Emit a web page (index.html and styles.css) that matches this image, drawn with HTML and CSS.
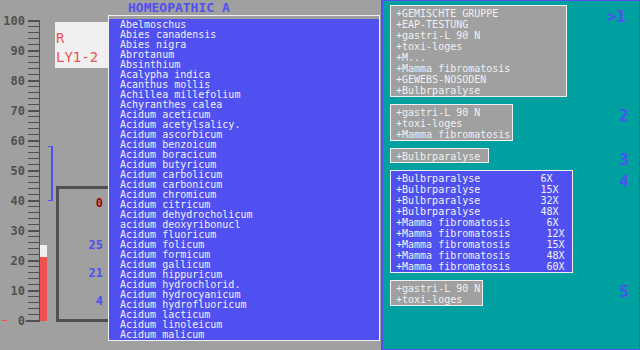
FILE: index.html
```html
<!DOCTYPE html>
<html lang="de">
<head>
    <meta charset="UTF-8">
    <title>Homeopathic A</title>
    <link rel="stylesheet" href="styles.css">
</head>
<body>
    <div class="screen">
        <div class="gauge">
            <svg class="ruler" width="55" height="350" viewBox="0 0 55 350">
                <defs>
                    <pattern id="minor" x="28" y="20" width="11" height="6" patternUnits="userSpaceOnUse">
                        <rect width="11" height="1" fill="#505050"/>
                    </pattern>
                    <pattern id="major" x="28" y="20" width="11" height="30" patternUnits="userSpaceOnUse">
                        <rect width="11" height="2" fill="#505050"/>
                    </pattern>
                </defs>
                <rect x="28" y="20" width="11" height="300" fill="url(#minor)"/>
                <rect x="28" y="20" width="11" height="302" fill="url(#major)"/>
                <rect x="26" y="320" width="13" height="2" fill="#505050"/>
                <rect x="39" y="20" width="1" height="302" fill="#505050"/>
                <g class="ruler-labels">
                    <text x="25" y="25">100</text>
                    <text x="25" y="55">90</text>
                    <text x="25" y="85">80</text>
                    <text x="25" y="115">70</text>
                    <text x="25" y="145">60</text>
                    <text x="25" y="175">50</text>
                    <text x="25" y="205">40</text>
                    <text x="25" y="235">30</text>
                    <text x="25" y="265">20</text>
                    <text x="25" y="295">10</text>
                    <text x="25" y="325">0</text>
                </g>
                <!-- level bar -->
                <rect x="40" y="245" width="7" height="12" fill="#f0f0f0"/>
                <rect x="40" y="257" width="7" height="64" fill="#f05050"/>
                <rect x="2" y="320" width="5" height="1" fill="#f05050"/>
                <!-- range bracket -->
                <rect x="51" y="146" width="2" height="55" fill="#5050f0"/>
                <rect x="48" y="146" width="5" height="1" fill="#5050f0"/>
                <rect x="48" y="200" width="5" height="1" fill="#5050f0"/>
            </svg>
            <div class="gauge-side">
                <div class="tag">
                    <div>R</div>
                    <div>LY1-2</div>
                </div>
                <div class="counter">
                    <div class="count zero">0</div>
                    <div class="count">25</div>
                    <div class="count">21</div>
                    <div class="count">4</div>
                </div>
            </div>
        </div>

        <div class="picker">
            <div class="picker-title">HOMEOPATHIC A</div>
            <div class="remedy-box">
                <ul class="remedy-list">
                    <li>Abelmoschus</li>
                    <li>Abies canadensis</li>
                    <li>Abies nigra</li>
                    <li>Abrotanum</li>
                    <li>Absinthium</li>
                    <li>Acalypha indica</li>
                    <li>Acanthus mollis</li>
                    <li>Achillea millefolium</li>
                    <li>Achyranthes calea</li>
                    <li>Acidum aceticum</li>
                    <li>Acidum acetylsalicy.</li>
                    <li>Acidum ascorbicum</li>
                    <li>Acidum benzoicum</li>
                    <li>Acidum boracicum</li>
                    <li>Acidum butyricum</li>
                    <li>Acidum carbolicum</li>
                    <li>Acidum carbonicum</li>
                    <li>Acidum chromicum</li>
                    <li>Acidum citricum</li>
                    <li>Acidum dehydrocholicum</li>
                    <li>acidum deoxyribonucl</li>
                    <li>Acidum fluoricum</li>
                    <li>Acidum folicum</li>
                    <li>Acidum formicum</li>
                    <li>Acidum gallicum</li>
                    <li>Acidum hippuricum</li>
                    <li>Acidum hydrochlorid.</li>
                    <li>Acidum hydrocyanicum</li>
                    <li>Acidum hydrofluoricum</li>
                    <li>Acidum lacticum</li>
                    <li>Acidum linoleicum</li>
                    <li>Acidum malicum</li>
                </ul>
            </div>
        </div>

        <div class="panel">
            <div class="group">
                <div class="slot slot-1">
                    <div>+GEMISCHTE GRUPPE</div>
                    <div>+EAP-TESTUNG</div>
                    <div>+gastri-L 90 N</div>
                    <div>+toxi-loges</div>
                    <div>+M...</div>
                    <div>+Mamma fibromatosis</div>
                    <div>+GEWEBS-NOSODEN</div>
                    <div>+Bulbrparalyse</div>
                </div>
                <div class="slot-no first">&gt;1</div>
            </div>
            <div class="group">
                <div class="slot slot-2">
                    <div>+gastri-L 90 N</div>
                    <div>+toxi-loges</div>
                    <div>+Mamma fibromatosis</div>
                </div>
                <div class="slot-no">2</div>
            </div>
            <div class="group">
                <div class="slot slot-3">
                    <div>+Bulbrparalyse</div>
                </div>
                <div class="slot-no">3</div>
            </div>
            <div class="group">
                <div class="slot slot-4 active">
                    <div>+Bulbrparalyse          6X</div>
                    <div>+Bulbrparalyse          15X</div>
                    <div>+Bulbrparalyse          32X</div>
                    <div>+Bulbrparalyse          48X</div>
                    <div>+Mamma fibromatosis      6X</div>
                    <div>+Mamma fibromatosis      12X</div>
                    <div>+Mamma fibromatosis      15X</div>
                    <div>+Mamma fibromatosis      48X</div>
                    <div>+Mamma fibromatosis      60X</div>
                </div>
                <div class="slot-no">4</div>
            </div>
            <div class="group">
                <div class="slot slot-5">
                    <div>+gastri-L 90 N</div>
                    <div>+toxi-loges</div>
                </div>
                <div class="slot-no">5</div>
            </div>
        </div>
    </div>
</body>
</html>
```

FILE: styles.css
```css
body {
    margin: 0;
    background-color: #a0a0a0;
    font-family: "DejaVu Sans Mono", "Liberation Mono", monospace;
    overflow: hidden;
}
.screen {
    display: flex;
    width: 640px;
    height: 350px;
}

/* left gauge */
.gauge {
    display: flex;
    width: 108px;
    flex-shrink: 0;
}
.ruler {
    display: block;
    flex-shrink: 0;
}
.ruler-labels text {
    font-family: "DejaVu Sans Mono", monospace;
    font-weight: bold;
    font-size: 12px;
    fill: #505050;
    text-anchor: end;
}
.gauge-side {
    width: 53px;
}
.tag {
    margin-top: 22px;
    height: 46px;
    padding: 7px 0 0 1px;
    box-sizing: border-box;
    background-color: #f0f0f0;
    color: #f05050;
    font-size: 14px;
    line-height: 19px;
}
.counter {
    margin: 118px 0 0 1px;
    height: 136px;
    border: 3px solid #505050;
    border-right: none;
    box-sizing: border-box;
    padding-right: 5px;
    text-align: right;
}
.count {
    font-size: 12px;
    font-weight: bold;
    line-height: 28px;
    color: #5050f0;
}
.count.zero {
    color: #a00000;
    margin-bottom: 14px;
}

/* remedy picker */
.picker {
    width: 272px;
    margin-right: 1px;
    flex-shrink: 0;
}
.picker-title {
    height: 15px;
    padding-left: 20px;
    font-size: 13px;
    font-weight: bold;
    line-height: 15px;
    color: #5050f0;
}
.remedy-box {
    border: 1px solid #f0f0f0;
}
.remedy-list {
    list-style: none;
    margin: 0;
    padding: 1px 0 0 11px;
    border-top: 3px solid #a0a0a0;
    background-color: #5050f0;
    color: #f0f0f0;
    font-size: 10px;
    line-height: 10px;
}

/* right panel */
.panel {
    flex: 1;
    display: flex;
    flex-direction: column;
    gap: 7px;
    height: 350px;
    box-sizing: border-box;
    padding: 4px 0 0 7px;
    background-color: #00a0a0;
    border: 1px solid #5050f0;
    border-left-width: 2px;
}
.group {
    display: flex;
    justify-content: space-between;
    align-items: flex-start;
}
.slot {
    box-sizing: border-box;
    padding: 2px 0 0 5px;
    border: 1px solid #f0f0f0;
    background-color: #a0a0a0;
    color: #f0f0f0;
    font-size: 10px;
    line-height: 11px;
}
.slot div {
    white-space: pre;
}
.slot.active {
    background-color: #5050f0;
}
.slot-1 { width: 177px; }
.slot-2 { width: 123px; }
.slot-3 { width: 99px; }
.slot-4 { width: 183px; }
.slot-5 { width: 93px; }
.slot-no {
    margin: 4px 10px -10px 0;
    font-size: 16px;
    font-weight: bold;
    line-height: 16px;
    color: #5050f0;
}
.slot-no.first {
    margin-right: 13px;
}
```
